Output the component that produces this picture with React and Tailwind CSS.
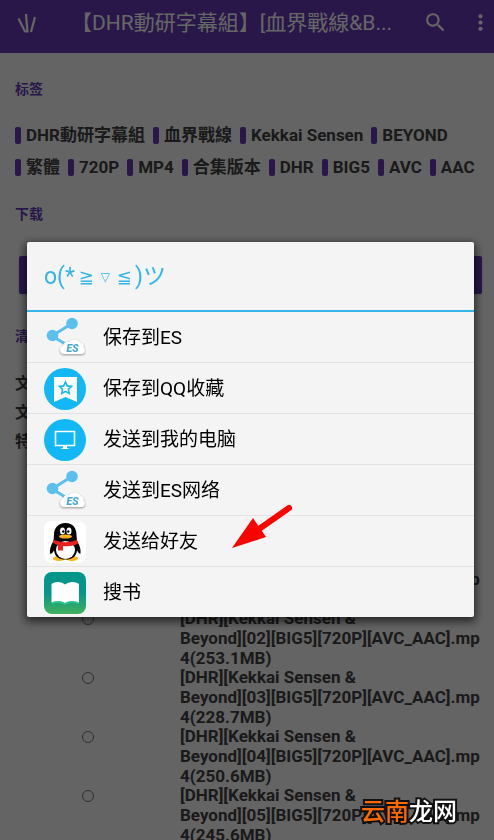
import { MdSearch, MdMoreVert } from 'react-icons/md';

const TAG_ROWS = [
  ['DHR動研字幕組', '血界戰線', 'Kekkai Sensen', 'BEYOND'],
  ['繁體', '720P', 'MP4', '合集版本', 'DHR', 'BIG5', 'AVC', 'AAC'],
];

const FILES = [
  { ep: '01', size: '255.2MB' },
  { ep: '02', size: '253.1MB' },
  { ep: '03', size: '228.7MB' },
  { ep: '04', size: '250.6MB' },
  { ep: '05', size: '245.6MB' },
];

const TARGETS = [
  { label: '保存到ES', icon: EsIcon },
  { label: '保存到QQ收藏', icon: FavoriteIcon },
  { label: '发送到我的电脑', icon: ComputerIcon },
  { label: '发送到ES网络', icon: EsIcon },
  { label: '发送给好友', icon: PenguinIcon },
  { label: '搜书', icon: BookIcon },
];

export default function App() {
  return (
    <div className="relative h-screen overflow-hidden bg-[#fafafa] font-[Roboto,'Noto_Sans_CJK_SC',sans-serif] text-[#424242]">
      <Header />
      <main className="pt-[26px] pr-3 pl-[15px]">
        <SectionTitle>标签</SectionTitle>
        <div className="mt-5 mb-[21px]">
          {TAG_ROWS.map((row, i) => (
            <div key={i} className="flex h-8 items-center gap-2 whitespace-nowrap">
              {row.map(tag => <Tag key={tag} label={tag} />)}
            </div>
          ))}
        </div>
        <SectionTitle>下载</SectionTitle>
        <div className="my-8 pl-1">
          <button aria-label="下载" className="block h-[38px] w-full rounded-xs bg-[#673ab7] shadow" />
        </div>
        <SectionTitle>清</SectionTitle>
        <div className="mt-[23px] text-base leading-[29px] font-bold">
          <p>文</p>
          <p>文</p>
          <p>特</p>
        </div>
        <ul className="mt-[93px] text-[17px] leading-5 font-bold whitespace-nowrap">
          {FILES.map(f => (
            <li key={f.ep} className="flex h-[59px] pl-[67px]">
              <span className="mt-[5px] size-3 shrink-0 rounded-full border border-[#757575]" />
              <span className="ml-[86px]">
                [DHR][Kekkai Sensen &amp;<br />
                Beyond][{f.ep}][BIG5][720P][AVC_AAC].mp<br />
                4({f.size})
              </span>
            </li>
          ))}
        </ul>
      </main>

      <ShareDialog />

      {/* Site mark */}
      <div className="absolute right-[37px] bottom-[10px] text-2xl leading-9 font-medium text-white [-webkit-text-stroke:4px_#111] [paint-order:stroke_fill]">
        <span className="text-[#ff6a00]">云南</span>龙网
      </div>
    </div>
  );
}

function Header() {
  return (
    <header className="flex h-[53px] items-center bg-[#673ab7] pr-[1px] pb-2 pl-[17px] text-white">
      <svg className="w-5 shrink-0" viewBox="0 0 20 20" fill="none" stroke="currentColor" strokeWidth="2.2">
        <path d="M1.500 5.500 8 18.500M9 1l1.500 18.500M18 4l-4 15M7.500 18.500h3" />
      </svg>
      <h1 className="ml-[34px] min-w-0 flex-1 text-[21px] leading-8 whitespace-nowrap">
        【DHR動研字幕組】[血界戰線&amp;B...
      </h1>
      <button aria-label="搜索" className="shrink-0"><MdSearch size={25} /></button>
      <button aria-label="更多" className="ml-5 shrink-0"><MdMoreVert size={25} /></button>
    </header>
  );
}

function SectionTitle({ children }) {
  return <h2 className="text-sm leading-5 font-bold text-[#673ab7]">{children}</h2>;
}

function Tag({ label }) {
  return (
    <span className="flex items-center gap-[5px] text-[17px] leading-6 font-bold">
      <i className="h-[17px] w-1.5 rounded-xs bg-[#673ab7]" />
      {label}
    </span>
  );
}

function ShareDialog() {
  return (
    <div className="fixed inset-0 flex items-center bg-black/60 pt-[19px] pr-5 pl-[27px]">
      <div role="dialog" aria-label="分享" className="relative w-full rounded-xs bg-[#f4f4f4] shadow-[0_3px_9px_2px_rgba(0,0,0,0.6)]">
        <h2 className="flex h-[70px] items-center border-b-2 border-[#33b5e5] px-[17px] pt-0.5 text-[23px] text-[#33b5e5]">
          <span>o(*</span>
          <span className="flex items-center pr-[1px] pl-[2px] text-center font-['DejaVu_Sans'] text-lg">
            <span className="w-[19px]">≧</span>
            <span className="w-[19px] text-xs">▽</span>
            <span className="w-[19px]">≦</span>
          </span>
          <span>)ツ</span>
        </h2>
        <ul className="divide-y divide-[#e2e2e2]">
          {TARGETS.map(({ label, icon: Icon }) => (
            <li key={label}>
              <button className="flex h-[50px] w-full items-center gap-[17px] px-[17px] pt-0.5 text-left text-[19px] text-black">
                <Icon />
                {label}
              </button>
            </li>
          ))}
        </ul>
        {/* Pointer to the friend entry */}
        <svg className="absolute top-[261px] left-[204px] w-[62px]" viewBox="0 0 62 46" fill="#f00">
          <path d="M58 5 28 26" stroke="#f00" strokeWidth="6" strokeLinecap="round" />
          <path d="M1 45 22 15 35 34Z" />
        </svg>
      </div>
    </div>
  );
}

function EsIcon() {
  return (
    <svg className="size-[42px] shrink-0" viewBox="0 0 42 42">
      <path d="M8 19 27 7M8 19l15 9" stroke="#5bc0ee" strokeWidth="3" />
      <circle cx="28" cy="6.500" r="5.800" fill="#5bc0ee" />
      <circle cx="8.500" cy="18.500" r="5.800" fill="#5bc0ee" />
      <path
        className="drop-shadow-[0_1px_1px_rgba(0,0,0,0.4)]"
        d="M20 37a4.200 4.200 0 0 1-1-8.200c.3-3 3.500-4.500 6-3.300 1.500-4 9-4.500 11.500.5 2.500.3 3.500 2.500 3 4.500 2.500 2 1.500 6.500-2 6.500Z"
        fill="#fff"
      />
      <text x="22.500" y="34.500" fontSize="10.500" fontWeight="900" fontStyle="italic" fill="#4aa9d4">ES</text>
    </svg>
  );
}

function FavoriteIcon() {
  return (
    <svg className="size-[42px] shrink-0" viewBox="0 0 42 42">
      <circle cx="21" cy="21" r="21" fill="#12b7f5" />
      <path d="M10 9h23v25l-11.500-5L10 34Z" fill="#fff" />
      <path d="m21.500 14 1.800 3.900 4.200.5-3.100 2.900.8 4.200-3.700-2.100-3.700 2.100.8-4.200-3.100-2.900 4.200-.5Z" fill="none" stroke="#12b7f5" strokeWidth="1.600" />
    </svg>
  );
}

function ComputerIcon() {
  return (
    <svg className="size-[42px] shrink-0" viewBox="0 0 42 42">
      <circle cx="21" cy="21" r="21" fill="#12b7f5" />
      <path d="M11.500 12.500h19v14h-19Z" fill="none" stroke="#fff" strokeWidth="1.600" />
      <path d="M19 27h4v2l3 1H16l3-1Z" fill="#fff" />
    </svg>
  );
}

function PenguinIcon() {
  return (
    <svg className="size-[42px] shrink-0" viewBox="0 0 42 42">
      <rect width="42" height="42" rx="8" fill="#fff" />
      <ellipse cx="15" cy="37.500" rx="6" ry="2.500" fill="#fbb11b" />
      <ellipse cx="28" cy="37.500" rx="6" ry="2.500" fill="#fbb11b" />
      <path d="M21.500 2C14 2 10 7 10 14l-.5 6C7 24 5.500 28 6 32.500c1 1 2.500-.5 4-3C11 36 15 38.500 21.500 38.500S32 36 33 29.500c1.500 2.500 3 4 3.500 3 .5-4.500-1-8.500-3.500-12.500l-.5-6C32.500 7 29 2 21.500 2Z" fill="#000" />
      <ellipse cx="21.500" cy="29" rx="9.500" ry="9" fill="#fff" />
      <path d="M9.500 18.500c7 3.500 17 3.500 23.500 0l1 4c-4 2.500-9 3-15 2.500v4.500h-5V24l-5-2Z" fill="#e9201d" />
      <ellipse cx="18.500" cy="10" rx="2.500" ry="3.500" fill="#fff" />
      <ellipse cx="25" cy="10" rx="2.500" ry="3.500" fill="#fff" />
      <circle cx="19.300" cy="10.500" r="1.200" />
      <circle cx="24.300" cy="10.500" r="1.200" />
      <ellipse cx="21.500" cy="15.500" rx="6.500" ry="2" fill="#fbb11b" />
    </svg>
  );
}

function BookIcon() {
  return (
    <svg className="size-[42px] shrink-0" viewBox="0 0 42 42">
      <defs>
        <linearGradient id="book" x1="0" y1="0" x2="0" y2="1">
          <stop offset="0.500" stopColor="#04968a" />
          <stop offset="1" stopColor="#43b05c" />
        </linearGradient>
      </defs>
      <rect width="42" height="42" rx="8" fill="url(#book)" />
      <path d="M7.500 30c5-2 10-2 13.500 1 4-3 9-3 14-1v2c-5-1.500-10-1.500-14 1-4-2.500-9-2.500-13.500-1Z" fill="#2fc48d" />
      <path d="M7.500 12c5-3 10-2.500 13.500.5 4-3 9-3.500 14-.5v18.500c-5-2-10-2-14 .5-4-2.500-9-2.500-13.500-.5Z" fill="#fff" />
    </svg>
  );
}
